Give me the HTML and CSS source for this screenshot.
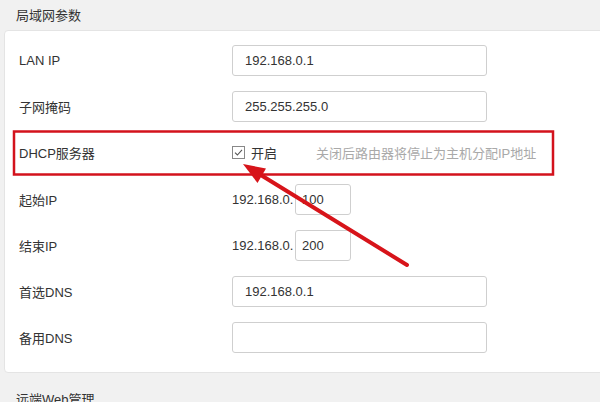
FILE: index.html
```html
<!DOCTYPE html>
<html lang="zh-CN">
<head>
    <meta charset="UTF-8">
    <title>局域网参数</title>
    <link rel="stylesheet" href="styles.css">
</head>
<body>
    <div class="page">
        <h3 class="section-title">局域网参数</h3>
        <div class="card">
            <div class="row">
                <label>LAN IP</label>
                <input class="ipt" type="text" value="192.168.0.1">
            </div>
            <div class="row">
                <label>子网掩码</label>
                <input class="ipt" type="text" value="255.255.255.0">
            </div>
            <div class="row">
                <label>DHCP服务器</label>
                <span class="check"><i class="box"><svg width="11" height="11" viewBox="0 0 11 11"><path d="M2 5.6 L4.4 8 L9 2.8" fill="none" stroke="#555" stroke-width="1.1"/></svg></i>开启</span>
                <span class="hint">关闭后路由器将停止为主机分配IP地址</span>
            </div>
            <div class="row">
                <label>起始IP</label>
                <span class="prefix">192.168.0.</span>
                <input class="ipt short" type="text" value="100">
            </div>
            <div class="row">
                <label>结束IP</label>
                <span class="prefix">192.168.0.</span>
                <input class="ipt short" type="text" value="200">
            </div>
            <div class="row">
                <label>首选DNS</label>
                <input class="ipt" type="text" value="192.168.0.1">
            </div>
            <div class="row">
                <label>备用DNS</label>
                <input class="ipt" type="text" value="">
            </div>
        </div>
        <h3 class="section-title">远端Web管理</h3>
    </div>

    <!-- 标注 -->
    <svg class="mark" width="600" height="402" viewBox="0 0 600 402">
        <rect x="14" y="131.5" width="539" height="43" fill="none" stroke="#d3121c" stroke-width="2.5"/>
        <line x1="407" y1="265" x2="260" y2="174.5" stroke="#d7141a" stroke-width="4" stroke-linecap="round"/>
        <polygon points="243,164 266,168.5 257.5,183" fill="#d7141a"/>
    </svg>
</body>
</html>
```

FILE: styles.css
```css
* {
    padding: 0;
    margin: 0;
    box-sizing: border-box;
}

body {
    background-color: #f1f1f1;
    font-family: "Liberation Sans", "Noto Sans CJK SC", sans-serif;
    font-size: 13px;
    color: #333;
    overflow: hidden;
}

.page {
    width: 600px;
    height: 402px;
    overflow: hidden;
}

.section-title {
    font-weight: normal;
    font-size: 13px;
    line-height: 32px;
    height: 30px;
    padding-left: 16px;
    color: #333;
}

.card {
    margin-left: 4px;
    margin-right: -20px;
    margin-bottom: 11px;
    background-color: #fff;
    border: 1px solid #e4e4e4;
    border-radius: 4px;
    padding: 6px 0 11px 14px;
}

.row {
    display: flex;
    align-items: center;
    height: 46.3px;
}

.row label {
    width: 213px;
    flex-shrink: 0;
}

.ipt {
    width: 255px;
    height: 31px;
    border: 1px solid #cfcfcf;
    border-radius: 3px;
    padding-left: 12px;
    font-family: inherit;
    font-size: 13px;
    color: #333;
    outline: none;
}

.ipt.short {
    width: 56px;
    padding-left: 6px;
}

.prefix {
    width: 63px;
}

.check {
    display: flex;
    align-items: center;
    width: 84px;
}

.box {
    width: 13px;
    height: 13px;
    border: 1px solid #888;
    margin-right: 6px;
    display: flex;
    align-items: center;
    justify-content: center;
}

.hint {
    color: #a9a9a9;
}

.mark {
    position: absolute;
    left: 0;
    top: 0;
    pointer-events: none;
}
```
